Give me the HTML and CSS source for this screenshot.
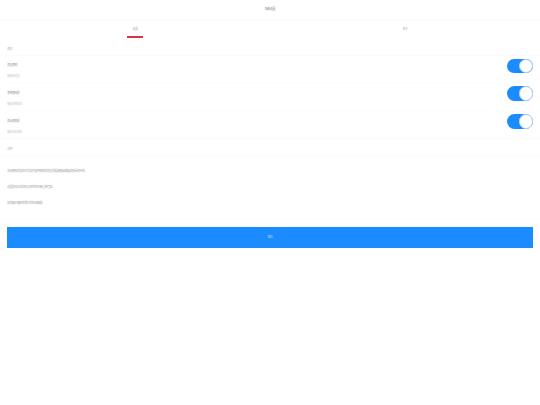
FILE: index.html
```html
<!DOCTYPE html>
<html lang="zh">
<head>
<meta charset="utf-8">
<title>隐私设置</title>
<link rel="stylesheet" href="styles.css">
</head>
<body>
<header class="topbar">隐私设置</header>
<nav class="tabs">
  <div class="tab tab-active"><span class="tab-label">设置</span></div>
  <div class="tab"><span class="tab-label">关于</span></div>
</nav>
<div class="section-label">通知</div>
<section class="rows">
  <div class="row">
    <div class="row-text"><div class="row-title">消息通知</div><div class="row-sub">接收新消息</div></div>
    <span class="toggle"><span class="knob"></span></span>
  </div>
  <div class="row">
    <div class="row-text"><div class="row-title">系统通知提</div><div class="row-sub">接收系统消息</div></div>
    <span class="toggle"><span class="knob"></span></span>
  </div>
  <div class="row">
    <div class="row-text"><div class="row-title">活动通知提</div><div class="row-sub">接收活动消息</div></div>
    <span class="toggle"><span class="knob"></span></span>
  </div>
</section>
<div class="section-label section-label-second">说明</div>
<section class="notes">
  <p class="note">关闭通知后您将无法及时收到相关的消息提醒请根据需要选择是否开启</p>
  <p class="note">设置修改之后将会立即生效无需重新登录</p>
  <p class="note">如有疑问请联系我们的在线客服</p>
</section>
<div class="actions"><button class="save">保存</button></div>
</body>
</html>
```
FILE: styles.css
```css
* { box-sizing: border-box; }
html, body { margin: 0; padding: 0; background: #fff; }
body {
  font-family: "Noto Sans CJK SC", "Liberation Sans", sans-serif;
  font-size: 3px;
  letter-spacing: -0.5px;
  color: #999;
  height: 405px;
  overflow: hidden;
}
.topbar {
  height: 19.5px;
  line-height: 18px;
  text-align: center;
  color: #888;
  border-bottom: 1px solid #fafafa;
}
.tabs { display: flex; height: 18px; }
.tab { flex: 1; display: flex; justify-content: center; }
.tab-label {
  width: 16px;
  height: 18.5px;
  line-height: 18px;
  text-align: center;
  color: #aaa;
}
.tab-active .tab-label { border-bottom: 2px solid #dc2f4c; }
.section-label {
  height: 18px;
  line-height: 23px;
  padding-left: 7px;
  color: #bbb;
  border-bottom: 1px solid #fbfbfb;
}
.section-label-second { height: 17px; line-height: 20px; }
.rows { border-bottom: 1px solid #fbfbfb; }
.row {
  height: 27.5px;
  margin-left: 7px;
  padding-right: 7px;
  display: flex;
  align-items: center;
  justify-content: space-between;
  border-bottom: 1px solid #fcfcfc;
}
.row:last-child { border-bottom: none; }
.row-text { margin-top: 5px; }
.row-title { color: #999; line-height: 11px; }
.row-sub { color: #ccc; line-height: 11px; }
.toggle {
  display: flex;
  justify-content: flex-end;
  width: 26.5px;
  height: 14.5px;
  margin-bottom: 5.5px;
  border-radius: 8px;
  background: #1a8cff;
}
.knob {
  width: 14.5px;
  height: 14.5px;
  border-radius: 50%;
  background: #fff;
  border: 1px solid #b5cfe8;
}
.notes { padding: 7px 7px 6.5px; border-bottom: 1px solid #fcfcfc; }
.note { margin: 0; height: 16px; line-height: 16px; color: #aaa; }
.actions { padding: 8px 7px; }
.save {
  display: block;
  width: 100%;
  height: 21px;
  border: 0;
  padding: 0;
  background: #1a8cff;
  color: #b5d8fb;
  font: inherit;
  letter-spacing: inherit;
}
```
